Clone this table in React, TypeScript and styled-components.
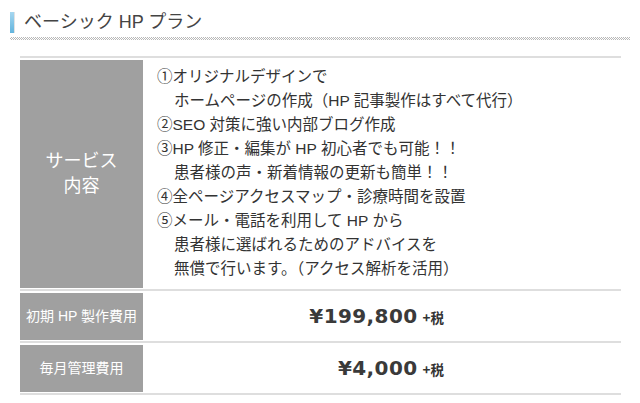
import React from "react";
import styled, { createGlobalStyle } from "styled-components";

const Global = createGlobalStyle`
  html, body { margin: 0; padding: 0; background: #fff; }
  body { font-family: "Liberation Sans", "Noto Sans CJK JP", sans-serif; color: #333; }
`;

const Page = styled.div`
  width: 640px;
  height: 403px;
  overflow: hidden;
  background: #fff;
`;

const Heading = styled.div`
  margin: 0 10px;
  padding-top: 12px;
`;

const HeadingRow = styled.div`
  display: flex;
  align-items: center;
  height: 21px;
`;

const Bar = styled.span`
  width: 4px;
  height: 21px;
  background: linear-gradient(#a6d7f0, #62b4dd);
  border-right: 1px solid #e2e2e2;
  margin-right: 9px;
`;

const Title = styled.h2`
  margin: 0;
  font-size: 18px;
  font-weight: normal;
  color: #444;
  line-height: 21px;
`;

const Dotted = styled.div`
  margin-top: 4px;
  height: 3px;
  background: repeating-conic-gradient(#b8b8b8 0 25%, #fff 0 50%) 0 0 / 2px 2px;
`;

const Table = styled.div`
  margin: 16px 0 0 20px;
  width: 601px;
  border-top: 2px solid #dedede;
`;

const Row = styled.div<{ $h: number }>`
  display: grid;
  grid-template-columns: 123px 1fr;
  padding: 2px 0 1px;
  border-bottom: 2px solid #dedede;
  height: ${(p) => p.$h}px;
`;

const Label = styled.div<{ $size: number }>`
  background: #a0a0a0;
  color: #fff;
  display: flex;
  align-items: center;
  justify-content: center;
  text-align: center;
  font-size: ${(p) => p.$size}px;
  line-height: 25px;
`;

const Content = styled.div`
  padding: 5px 0 7px 14px;
  font-size: 15.5px;
  line-height: 24px;
  color: #333;
`;

const Line = styled.div<{ $indent?: boolean }>`
  padding-left: ${(p) => (p.$indent ? "17px" : "0")};
  white-space: nowrap;
`;

const PriceCell = styled.div`
  display: flex;
  align-items: center;
  justify-content: flex-end;
  padding-right: 177px;
  padding-bottom: 2px;
`;

const Price = styled.span`
  font-family: "DejaVu Sans", sans-serif;
  font-weight: bold;
  font-size: 20px;
  letter-spacing: 0.4px;
  color: #3a3a3a;
`;

const Tax = styled.span`
  font-family: "Noto Sans CJK JP", sans-serif;
  font-weight: bold;
  font-size: 13.5px;
  color: #333;
  margin-left: 5px;
  padding-top: 2px;
`;

export default function App() {
  return (
    <Page>
      <Global />
      <Heading>
        <HeadingRow>
          <Bar />
          <Title>ベーシック HP プラン</Title>
        </HeadingRow>
        <Dotted />
      </Heading>
      <Table>
        <Row $h={228}>
          <Label $size={18}>
            サービス
            <br />
            内容
          </Label>
          <Content>
            <Line>①オリジナルデザインで</Line>
            <Line $indent>ホームページの作成（HP 記事製作はすべて代行）</Line>
            <Line>②SEO 対策に強い内部ブログ作成</Line>
            <Line>③HP 修正・編集が HP 初心者でも可能！！</Line>
            <Line $indent>患者様の声・新着情報の更新も簡単！！</Line>
            <Line>④全ページアクセスマップ・診療時間を設置</Line>
            <Line>⑤メール・電話を利用して HP から</Line>
            <Line $indent>患者様に選ばれるためのアドバイスを</Line>
            <Line $indent>無償で行います。（アクセス解析を活用）</Line>
          </Content>
        </Row>
        <Row $h={47}>
          <Label $size={14}>初期 HP 製作費用</Label>
          <PriceCell>
            <Price>¥199,800</Price>
            <Tax>+税</Tax>
          </PriceCell>
        </Row>
        <Row $h={47}>
          <Label $size={14}>毎月管理費用</Label>
          <PriceCell>
            <Price>¥4,000</Price>
            <Tax>+税</Tax>
          </PriceCell>
        </Row>
      </Table>
    </Page>
  );
}
